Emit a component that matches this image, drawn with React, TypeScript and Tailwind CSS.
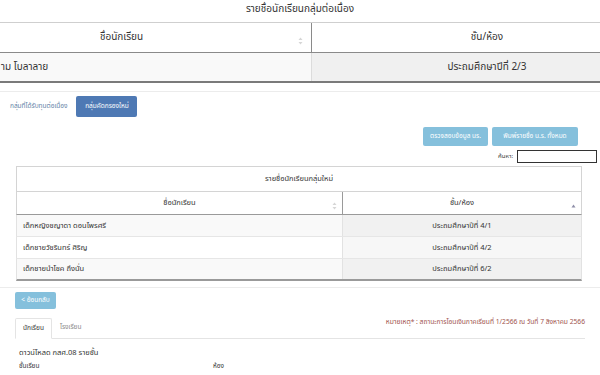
import React from "react";

const F = { fontFamily: '"Noto Sans Thai", "Noto Sans", "Liberation Sans", sans-serif' };

function SortBoth() {
  return (
    <svg width="5" height="8" viewBox="0 0 5 8" className="inline-block">
      <path d="M2.5 0.5 L4.5 3 L0.5 3 Z" fill="#d6d6d6" />
      <path d="M2.5 7.5 L4.5 5 L0.5 5 Z" fill="#d6d6d6" />
    </svg>
  );
}

function SortUp() {
  return (
    <svg width="5" height="5" viewBox="0 0 5 5" className="inline-block">
      <path d="M2.5 0.5 L4.5 3.5 L0.5 3.5 Z" fill="#8e8ea8" />
    </svg>
  );
}

export default function App() {
  const rows = [
    ["เด็กหญิงชญาดา ดอนไพรศรี", "ประถมศึกษาปีที่ 4/1"],
    ["เด็กชายวัชรินทร์ ศิริญ", "ประถมศึกษาปีที่ 4/2"],
    ["เด็กชายนำโชค ถึงนั่น", "ประถมศึกษาปีที่ 6/2"],
  ];
  return (
    <div className="w-[600px] h-[375px] overflow-hidden bg-white text-[#333]" style={F}>
      <div className="h-[22px] flex items-center justify-center text-[10px] leading-none pb-[6px] pt-[2px]">
        รายชื่อนักเรียนกลุ่มต่อเนื่อง
      </div>
      <div className="w-[730px] -ml-[68px] text-[10px]">
        <div className="flex h-[31px] border-t border-[#cfcfcf] border-b border-b-[#8a8a8a]">
          <div className="w-[380px] flex items-center justify-center relative border-r border-[#8a8a8a]">
            <span>ชื่อนักเรียน</span>
            <span className="absolute right-[8px] top-[11px]"><SortBoth /></span>
          </div>
          <div className="flex-1 flex items-center justify-center">ชั้น/ห้อง</div>
        </div>
        <div className="flex h-[30px] border-b-2 border-[#7a7a7a]">
          <div className="w-[380px] flex items-center pl-[69px] bg-[#f9f9f9] border-r border-[#dcdcdc]">าม โบลาลาย</div>
          <div className="flex-1 flex items-center justify-center bg-[#f0f0f0]">ประถมศึกษาปีที่ 2/3</div>
        </div>
      </div>
      <div className="mt-[8px] border-t border-[#ececec]" />
      <div className="flex items-center h-[21px] mt-[4px] pl-[10px]">
        <span className="text-[6.5px] text-[#5f7fa6]">กลุ่มที่ได้รับทุนต่อเนื่อง</span>
        <span className="ml-[9px] h-[21px] w-[61px] rounded-[2px] bg-[#4e79b4] text-white text-[6.5px] flex items-center justify-center">
          กลุ่มคัดกรองใหม่
        </span>
      </div>
      <div className="flex justify-end gap-[4px] pr-[22px] mt-[10px]">
        <span className="h-[19px] w-[65px] rounded-[2px] bg-[#85c0dc] text-white text-[6.5px] flex items-center justify-center">ตรวจสอบข้อมูล นร.</span>
        <span className="h-[19px] w-[86px] rounded-[2px] bg-[#85c0dc] text-white text-[6.5px] flex items-center justify-center">พิมพ์รายชื่อ น.ร. ทั้งหมด</span>
      </div>
      <div className="flex justify-end items-center pr-[3px] mt-[4px] h-[13px]">
        <span className="text-[6px] mr-[4px]">ค้นหา:</span>
        <span className="w-[80px] h-[13px] border border-[#333] bg-white" />
      </div>
      <div className="ml-[16px] w-[566px] mt-[3px] text-[7.5px]">
        <div className="h-[25px] flex items-center justify-center border border-[#d4d4d4] border-b-0">รายชื่อนักเรียนกลุ่มใหม่</div>
        <div className="flex h-[24px] border border-[#d4d4d4] border-b-[#9a9a9a]">
          <div className="w-[326px] flex items-center justify-center relative border-r border-[#9a9a9a]">
            <span>ชื่อนักเรียน</span>
            <span className="absolute right-[5px] top-[8px]"><SortBoth /></span>
          </div>
          <div className="flex-1 flex items-center justify-center relative">
            <span>ชั้น/ห้อง</span>
            <span className="absolute right-[5px] top-[9px]"><SortUp /></span>
          </div>
        </div>
        {rows.map((r, i) => (
          <div key={i} className={"flex h-[22px] border-l border-r border-[#e2e2e2] " + (i < 2 ? "border-b border-b-[#e6e6e6]" : "border-b-2 border-b-[#9a9a9a]")}>
            <div className={"w-[326px] flex items-center pl-[6px] border-r border-[#e2e2e2] " + (i % 2 === 0 ? "bg-[#f9f9f9]" : "bg-white")}>{r[0]}</div>
            <div className={"flex-1 flex items-center justify-center " + (i % 2 === 0 ? "bg-[#f1f1f1]" : "bg-[#f7f7f7]")}>{r[1]}</div>
          </div>
        ))}
      </div>
      <div className="mt-[6px] border-t border-[#ececec]" />
      <div className="pl-[15px] mt-[4px]">
        <span className="h-[17px] w-[41px] rounded-[2px] bg-[#85c0dc] text-white text-[6.5px] flex items-center justify-center">&lt; ย้อนกลับ</span>
      </div>
      <div className="flex items-end ml-[15px] mr-[15px] mt-[9px] border-b border-[#e4e4e4] h-[21px]">
        <span className="h-[21px] w-[37px] border border-[#e4e4e4] border-b-white -mb-px bg-white rounded-t-[2px] text-[6.5px] flex items-center justify-center">นักเรียน</span>
        <span className="h-[21px] ml-[8px] text-[6.5px] text-[#888] flex items-center">โรงเรียน</span>
        <span className="ml-auto mb-[11px] text-[6.7px] text-[#a0544e]">หมายเหตุ* : สถานะการโอนเงินภาคเรียนที่ 1/2566 ณ วันที่ 7 สิงหาคม 2566</span>
      </div>
      <div className="pl-[19px] mt-[9px] text-[7.5px] leading-[9px]">ดาวน์โหลด กสศ.08 รายชั้น</div>
      <div className="flex pl-[19px] mt-[5px] text-[6.5px] leading-[8px]">
        <span className="w-[194px]">ชั้นเรียน</span>
        <span>ห้อง</span>
      </div>
    </div>
  );
}
